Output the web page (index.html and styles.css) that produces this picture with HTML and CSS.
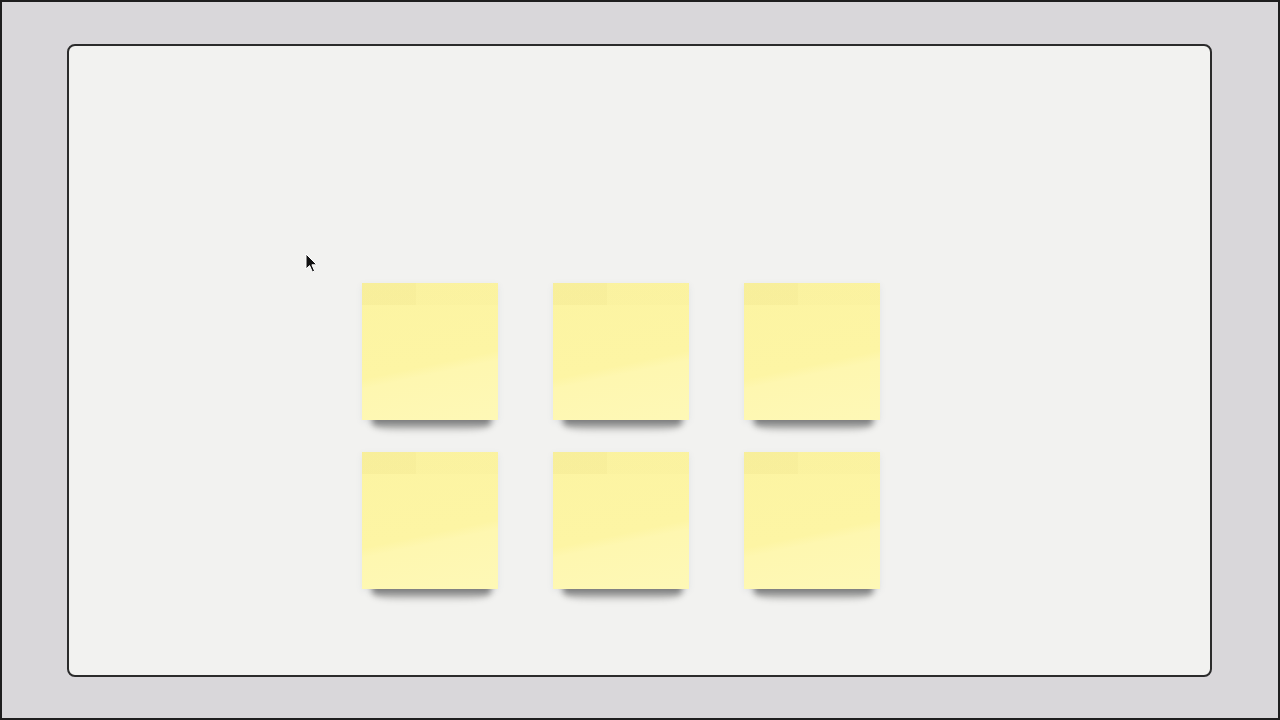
FILE: index.html
```html
<!DOCTYPE html>
<html>
<head>
<meta charset="utf-8">
<link rel="stylesheet" href="styles.css">
</head>
<body>
<div class="frame">
  <div class="board">
    <div class="notes">
      <div class="note"></div>
      <div class="note"></div>
      <div class="note"></div>
      <div class="note"></div>
      <div class="note"></div>
      <div class="note"></div>
    </div>
    <svg class="cursor" width="14" height="22" viewBox="0 0 14 22">
      <path d="M1 1 L1 16 L4.6 12.6 L7.4 19 L9.6 18 L6.9 11.8 L11.8 11.8 Z" fill="#111" stroke="#fff" stroke-width="1" stroke-linejoin="round"/>
    </svg>
  </div>
</div>
</body>
</html>
```

FILE: styles.css
```css
html, body {
  margin: 0;
  padding: 0;
}
body {
  width: 1280px;
  height: 720px;
  overflow: hidden;
  font-family: "Liberation Sans", Arial, sans-serif;
}
.frame {
  box-sizing: border-box;
  width: 1280px;
  height: 720px;
  border: 2px solid #1e1e1e;
  background: #d9d7da;
  padding: 42px 67px 42px 65px;
}
.board {
  position: relative;
  box-sizing: border-box;
  width: 1145px;
  height: 633px;
  border: 2px solid #2b2b2b;
  border-radius: 8px;
  background: #f2f2f0;
  padding: 237px 0 0 293px;
}
.notes {
  position: relative;
  z-index: 0;
  display: grid;
  grid-template-columns: repeat(3, 136px);
  grid-auto-rows: 137px;
  column-gap: 55px;
  row-gap: 32px;
}
.note {
  position: relative;
  background: linear-gradient(168deg, #fcf4a2 0%, #fdf5a4 58%, #fef7b0 64%, #fef8b6 100%);
  box-shadow: 0 2px 6px rgba(120, 130, 160, 0.12);
}
.note::before {
  content: "";
  position: absolute;
  left: 0;
  top: 0;
  width: 100%;
  height: 22px;
  background: linear-gradient(90deg, rgba(225, 210, 120, 0.16) 0, rgba(225, 210, 120, 0.16) 54px, rgba(225, 210, 120, 0.06) 54px);
}
.note::after {
  content: "";
  position: absolute;
  left: 10px;
  right: 7px;
  bottom: -12px;
  height: 20px;
  background: linear-gradient(180deg, rgba(30, 30, 30, 0.65) 0%, rgba(30, 30, 30, 0.5) 55%, rgba(30, 30, 30, 0) 100%);
  filter: blur(3px);
  border-radius: 0 0 40% 40%;
  z-index: -1;
}
.cursor {
  position: absolute;
  left: 236px;
  top: 207px;
}
```
